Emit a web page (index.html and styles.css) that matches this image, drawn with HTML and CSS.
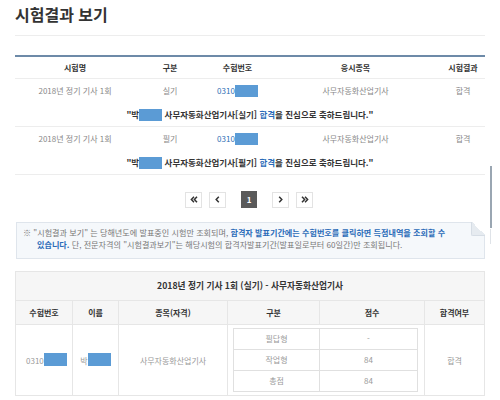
FILE: index.html
```html
<!DOCTYPE html>
<html lang="ko">
<head>
<meta charset="utf-8">
<link rel="stylesheet" href="styles.css">
</head>
<body>
<div class="page">
  <div class="head">
    <h1 class="title">시험결과 보기</h1>
  </div>

  <div class="result">
    <div class="result-head">
      <div>시험명</div><div>구분</div><div>수험번호</div><div>응시종목</div><div>시험결과</div>
    </div>
    <div class="record">
      <div class="record-row">
        <div>2018년 정기 기사 1회</div><div>실기</div><div><span class="num">0310</span><span class="mask"></span></div><div>사무자동화산업기사</div><div>합격</div>
      </div>
      <div class="record-msg">"박<span class="mask"></span> 사무자동화산업기사[실기] <span class="pass">합격</span>을 진심으로 축하드립니다."</div>
    </div>
    <div class="record">
      <div class="record-row">
        <div>2018년 정기 기사 1회</div><div>필기</div><div><span class="num">0310</span><span class="mask"></span></div><div>사무자동화산업기사</div><div>합격</div>
      </div>
      <div class="record-msg">"박<span class="mask"></span> 사무자동화산업기사[필기] <span class="pass">합격</span>을 진심으로 축하드립니다."</div>
    </div>
  </div>

  <div class="pager">
    <div class="pager-group">
      <span class="pg"><svg width="8" height="7" viewBox="0 0 8 7"><path d="M4 0.8 L1.4 3.5 L4 6.2 M7 0.8 L4.4 3.5 L7 6.2" fill="none" stroke="#333" stroke-width="1.5"/></svg></span>
      <span class="pg"><svg width="5" height="7" viewBox="0 0 5 7"><path d="M3.8 0.8 L1.2 3.5 L3.8 6.2" fill="none" stroke="#333" stroke-width="1.5"/></svg></span>
    </div>
    <span class="pg pg-on">1</span>
    <div class="pager-group">
      <span class="pg"><svg width="5" height="7" viewBox="0 0 5 7"><path d="M1.2 0.8 L3.8 3.5 L1.2 6.2" fill="none" stroke="#333" stroke-width="1.5"/></svg></span>
      <span class="pg"><svg width="8" height="7" viewBox="0 0 8 7"><path d="M1 0.8 L3.6 3.5 L1 6.2 M4 0.8 L6.6 3.5 L4 6.2" fill="none" stroke="#333" stroke-width="1.5"/></svg></span>
    </div>
  </div>

  <div class="note">
    <p>※ "시험결과 보기" 는 당해년도에 발표중인 시험만 조회되며, <span class="em">합격자 발표기간에는 수험번호를 클릭하면 득점내역을 조회할 수<br>있습니다.</span> 단, 전문자격의 "시험결과보기"는 해당시험의 합격자발표기간(발표일로부터 60일간)만 조회됩니다.</p>
  </div>

  <div class="detail">
    <div class="detail-title">2018년 정기 기사 1회 (실기) - 사무자동화산업기사</div>
    <div class="detail-head">
      <div>수험번호</div><div>이름</div><div>종목(자격)</div><div>구분</div><div>점수</div><div>합격여부</div>
    </div>
    <div class="detail-body">
      <div class="cell-left"><span>0310</span><span class="mask mask-lg"></span></div>
      <div><span>박</span><span class="mask mask-lg"></span></div>
      <div>사무자동화산업기사</div>
      <div class="score-cell">
        <div class="score">
          <div>필답형</div><div>-</div>
          <div>작업형</div><div>84</div>
          <div>총점</div><div>84</div>
        </div>
      </div>
      <div>합격</div>
    </div>
  </div>

  <div class="scroll-mark"></div>
  <div class="scroll-mark scroll-mark-light"></div>
</div>
</body>
</html>
```

FILE: styles.css
```css
html, body {
  margin: 0;
  background: #fff;
}

body {
  font-family: "Noto Sans CJK KR", "Noto Sans", sans-serif;
  color: #333;
  font-size: 8px;
}

.page {
  position: relative;
  width: 470px;
  padding: 0 15px;
}

.head {
  height: 35px;
  border-bottom: 1px solid #ededed;
}

.title {
  margin: 0;
  padding-top: 3px;
  font-size: 16px;
  line-height: 22px;
  font-weight: bold;
  color: #333;
}

.result {
  margin-top: 19px;
  border-top: 2px solid #6d8aa8;
}

.result-head,
.record-row {
  display: grid;
  grid-template-columns: 120px 70px 65px 171px 44px;
  text-align: center;
}

.result-head {
  height: 21px;
  line-height: 21px;
  font-weight: bold;
  color: #333;
  border-bottom: 1px solid #ededed;
}

.record {
  border-bottom: 1px solid #ededed;
}

.record-row {
  height: 23px;
  line-height: 23px;
  color: #888;
}

.num {
  color: #2f6fb5;
}

.mask {
  display: inline-block;
  width: 23px;
  height: 12px;
  background: #5b9bd5;
  vertical-align: middle;
  position: relative;
  top: -1px;
}

.mask-lg {
  height: 13px;
}

.record-msg {
  height: 24px;
  line-height: 24px;
  text-align: center;
  font-weight: bold;
  font-size: 8.5px;
  color: #333;
}

.pass {
  color: #2a6bb8;
}

.pager {
  display: flex;
  justify-content: center;
  align-items: center;
  margin-top: 16px;
  gap: 15px;
  padding-right: 2px;
}

.pager-group {
  display: flex;
  gap: 7px;
}

.pg {
  box-sizing: border-box;
  width: 17px;
  height: 16px;
  border: 1px solid #e3e3e3;
  display: flex;
  align-items: center;
  justify-content: center;
  background: #fff;
}

.pg-on {
  width: 16px;
  height: 17px;
  background: #5a5a5a;
  border-color: #5a5a5a;
  color: #fff;
  font-weight: bold;
  font-size: 8px;
}

.note {
  position: relative;
  margin-top: 14px;
  margin-left: 1px;
  background: #f5f8fb;
  border: 1px solid #dfe5ec;
  padding: 4px 20px 7px 20px;
}

.note::after {
  content: "";
  position: absolute;
  top: -1px;
  right: -1px;
  width: 14px;
  height: 14px;
  background: linear-gradient(to bottom left, #fff 50%, #e6ebf0 50%);
  border-left: 1px solid #d6dde5;
  border-bottom: 1px solid #d6dde5;
  border-bottom-left-radius: 2px;
  box-sizing: border-box;
}

.note p {
  margin: 0;
  text-indent: -14px;
  font-size: 8.1px;
  line-height: 12px;
  color: #777;
  white-space: nowrap;
}

.note .em {
  color: #2a6bb8;
  font-weight: bold;
}

.detail {
  margin-top: 12px;
  border-top: 1px solid #e6e6e6;
  border-left: 1px solid #e6e6e6;
  border-right: 1px solid #e6e6e6;
}

.detail-title {
  height: 28px;
  line-height: 28px;
  background: #f6f6f6;
  text-align: center;
  font-weight: bold;
  font-size: 8.7px;
  color: #333;
  border-bottom: 1px solid #e6e6e6;
}

.detail-head,
.detail-body {
  display: grid;
  grid-template-columns: 57px 46px 109px 92px 105px 59px;
  text-align: center;
}

.detail-head {
  height: 23px;
  line-height: 23px;
  background: #f6f6f6;
  font-weight: bold;
  color: #333;
  border-bottom: 1px solid #e6e6e6;
}

.detail-head > div,
.detail-body > div {
  border-right: 1px solid #e6e6e6;
}

.detail-head > div:last-child,
.detail-body > div:last-child {
  border-right: none;
}

.detail-body {
  height: 70px;
  color: #999;
  border-bottom: 1px solid #e6e6e6;
}

.detail-body > div {
  display: flex;
  align-items: center;
  justify-content: center;
}

.detail-body > .cell-left {
  justify-content: flex-start;
  padding-left: 10px;
}

.detail-body > .score-cell {
  grid-column: span 2;
  align-items: flex-start;
  justify-content: flex-start;
  padding: 3px 0 0 5px;
}

.score {
  display: grid;
  grid-template-columns: 86px 98px;
  grid-auto-rows: 21px;
  border-top: 1px solid #e0e0e0;
  border-left: 1px solid #e0e0e0;
}

.score > div {
  border-right: 1px solid #e0e0e0;
  border-bottom: 1px solid #e0e0e0;
  text-align: center;
  line-height: 20px;
  color: #999;
}

.scroll-mark {
  position: absolute;
  left: 490px;
  top: 166px;
  width: 2px;
  height: 62px;
  background: #9aa6b2;
}

.scroll-mark-light {
  top: 229px;
  height: 15px;
  width: 1px;
  background: #dfe3e8;
}
```
